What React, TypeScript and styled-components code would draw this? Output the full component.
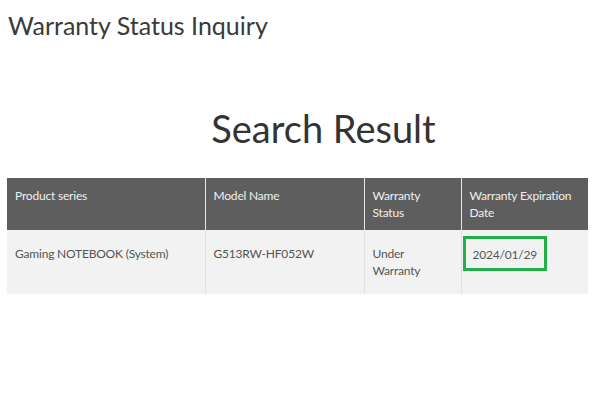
import { createGlobalStyle } from "styled-components";
import styled from "styled-components";

const GlobalStyle = createGlobalStyle`
  html, body {
    margin: 0;
    padding: 0;
    background: #ffffff;
  }
  body {
    font-family: Lato, "Open Sans", Arial, sans-serif;
    color: #333333;
  }
`;

const Page = styled.div`
  width: 600px;
  height: 417px;
  box-sizing: border-box;
  padding: 9px 12px 0 7px;
  overflow: hidden;
`;

const PageTitle = styled.h1`
  margin: 0 0 0 1px;
  font-size: 25px;
  font-weight: 400;
  line-height: 32px;
  color: #3a3a3a;
`;

const ResultTitle = styled.h2`
  margin: 64px 0 0;
  padding-left: 52px;
  font-size: 38px;
  font-weight: 400;
  line-height: 46px;
  text-align: center;
  color: #333333;
`;

const Table = styled.table`
  margin-top: 27px;
  width: 581px;
  border-collapse: collapse;
  table-layout: fixed;
  font-size: 12px;
  letter-spacing: -0.2px;
  line-height: 17px;
`;

const HeadCell = styled.th<{ $w: number }>`
  width: ${(p) => p.$w}px;
  height: 52px;
  box-sizing: border-box;
  padding: 9px 8px 8px;
  background: #5e5e5e;
  color: #f0f0f0;
  font-weight: 400;
  text-align: left;
  vertical-align: top;
  border-right: 1px solid #e6e6e6;

  &:last-child {
    border-right: none;
    padding-right: 4px;
  }
`;

const Cell = styled.td`
  height: 64px;
  box-sizing: border-box;
  padding: 15px 8px 8px;
  background: #f2f2f2;
  color: #555555;
  vertical-align: top;
  border-right: 1px solid #e2e2e2;

  &:last-child {
    border-right: none;
  }
`;

const DateCell = styled(Cell)`
  padding: 6px 0 0 1px;
`;

const Highlight = styled.span`
  display: inline-block;
  width: 84px;
  height: 35px;
  box-sizing: border-box;
  padding: 7px 0 0 7px;
  border: 3px solid #1fb04a;
`;

const columns = [
  { label: "Product series", w: 198 },
  { label: "Model Name", w: 159 },
  { label: "Warranty Status", w: 97 },
  { label: "Warranty Expiration Date", w: 127 },
];

export default function App() {
  return (
    <Page>
      <GlobalStyle />
      <PageTitle>Warranty Status Inquiry</PageTitle>
      <ResultTitle>Search Result</ResultTitle>
      <Table>
        <thead>
          <tr>
            {columns.map((c) => (
              <HeadCell key={c.label} $w={c.w}>
                {c.label}
              </HeadCell>
            ))}
          </tr>
        </thead>
        <tbody>
          <tr>
            <Cell>Gaming NOTEBOOK (System)</Cell>
            <Cell>G513RW-HF052W</Cell>
            <Cell>Under Warranty</Cell>
            <DateCell>
              <Highlight>2024/01/29</Highlight>
            </DateCell>
          </tr>
        </tbody>
      </Table>
    </Page>
  );
}
